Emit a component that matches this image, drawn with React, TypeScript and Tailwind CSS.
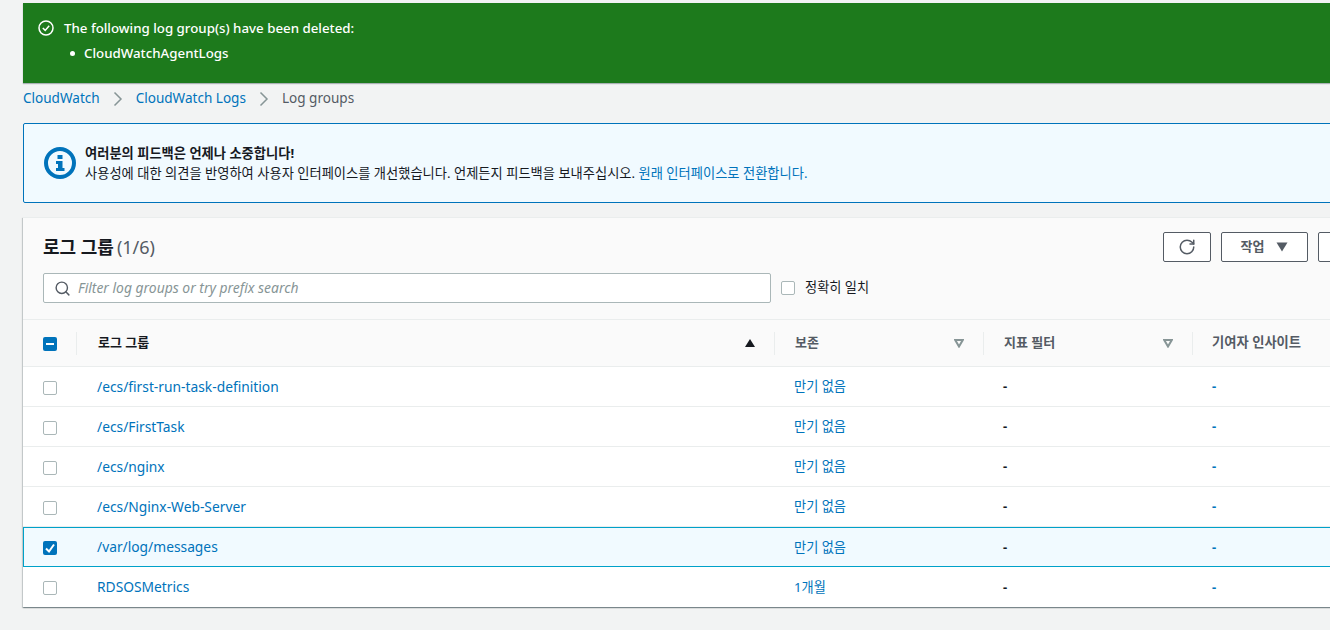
import { Search, RotateCw } from 'lucide-react'

const FONT = "font-['Noto_Sans','Noto_Sans_CJK_KR',sans-serif]"
const GRID = 'grid grid-cols-[54px_698px_209px_209px_209px]'

const rows = [
  { name: '/ecs/first-run-task-definition', retention: '만기 없음' },
  { name: '/ecs/FirstTask', retention: '만기 없음' },
  { name: '/ecs/nginx', retention: '만기 없음' },
  { name: '/ecs/Nginx-Web-Server', retention: '만기 없음' },
  { name: '/var/log/messages', retention: '만기 없음', selected: true },
  { name: 'RDSOSMetrics', retention: '1개월' },
]

function Checkbox({ state }: { state?: 'checked' | 'mixed' }) {
  if (state) {
    return (
      <span className="flex h-[14px] w-[14px] items-center justify-center rounded-[2px] bg-[#0073bb]">
        <svg viewBox="0 0 14 14" className="h-[14px] w-[14px]" fill="none" stroke="white" strokeWidth="2">
          {state === 'checked' ? <path d="M3 7.5 L6 10.5 L11 3.5" /> : <path d="M3 7 H11" />}
        </svg>
      </span>
    )
  }
  return <span className="block h-[14px] w-[14px] rounded-[2px] border border-[#aab7b8] bg-white" />
}

function Sep() {
  return <span className="h-[23px] w-px bg-[#eaeded]" />
}

function FilterCaret() {
  return (
    <svg viewBox="0 0 10 10" className="h-[10px] w-[10px]" fill="none" stroke="#879596" strokeWidth="2">
      <path d="M1.2 2 H8.8 L5 8.5 Z" />
    </svg>
  )
}

function Chevron() {
  return (
    <svg viewBox="0 0 10 16" className="mx-[13px] h-[16px] w-[10px]" fill="none" stroke="#879596" strokeWidth="1.5">
      <path d="M1.5 1.5 L8 8 L1.5 14.5" />
    </svg>
  )
}

export default function App() {
  return (
    <div className={`${FONT} h-[630px] w-[1330px] overflow-hidden bg-[#f2f3f3] pl-[23px] pt-[3px] text-[13px] text-[#16191f]`}>
      <div className="w-[1379px]">
        {/* Flash */}
        <div className="flex h-[80px] bg-[#1d7a1c] pl-[15px] pt-[15px] text-[13.3px] text-white shadow-[0_1px_1px_rgba(0,28,36,0.3)]">
          <svg viewBox="0 0 16 16" className="mt-[2px] h-[16px] w-[16px]" fill="none" stroke="white" strokeWidth="1.5">
            <circle cx="8" cy="8" r="7" />
            <path d="M4.8 8 L7.2 10.4 L11.2 5.8" />
          </svg>
          <div className="ml-[10px] leading-[20px]">
            <div className="font-medium">The following log group(s) have been deleted:</div>
            <ul className="mt-[5px] flex items-center pl-[6px]">
              <li className="mr-[9px] h-[5px] w-[5px] rounded-full bg-white" />
              <li className="font-medium">CloudWatchAgentLogs</li>
            </ul>
          </div>
        </div>

        {/* Breadcrumbs */}
        <div className="flex h-[30px] items-center pt-[1px] text-[13.55px] text-[#545b64]">
          <span className="text-[#0073bb]">CloudWatch</span>
          <Chevron />
          <span className="text-[#0073bb]">CloudWatch Logs</span>
          <Chevron />
          <span>Log groups</span>
        </div>

        {/* Info */}
        <div className="mt-[10px] flex h-[80px] items-center rounded-[2px] border border-[#0073bb] bg-[#f1faff] pl-[20px]">
          <svg viewBox="0 0 32 32" className="h-[32px] w-[32px]">
            <circle cx="16" cy="16" r="14" fill="none" stroke="#0073bb" strokeWidth="4" />
            <rect x="13.5" y="8" width="5" height="4" fill="#0073bb" />
            <path d="M12 14 H18.5 V21 H20.5 V24 H12 V21 H14 V17 H12 Z" fill="#0073bb" />
          </svg>
          <div className="ml-[9px] text-[13.25px] leading-[20px]">
            <div className="font-bold">여러분의 피드백은 언제나 소중합니다!</div>
            <div>
              사용성에 대한 의견을 반영하여 사용자 인터페이스를 개선했습니다. 언제든지 피드백을 보내주십시오.{' '}
              <span className="text-[#0073bb]">원래 인터페이스로 전환합니다.</span>
            </div>
          </div>
        </div>

        {/* Card */}
        <div className="mt-[14px] h-[390px] border-t border-[#eaeded] bg-white shadow-[0_1px_1px_0_rgba(0,28,36,0.3),1px_1px_1px_0_rgba(0,28,36,0.15),-1px_1px_1px_0_rgba(0,28,36,0.15)]">
          <div className="h-[102px] border-b border-[#eaeded] bg-[#fafafa] pl-[20px]">
            <div className="flex h-[55px] items-center justify-between pr-[43px]">
              <h1 className="pt-[4px] text-[18px] font-bold">
                로그 그룹<span className="ml-[3px] font-normal text-[#545b64]">(1/6)</span>
              </h1>
              <div className="flex items-center gap-[10px] pt-[2px]">
                <button className="flex h-[30px] w-[48px] items-center justify-center rounded-[2px] border border-[#545b64] bg-white text-[#545b64]">
                  <RotateCw size={18} strokeWidth={2} />
                </button>
                <button className="flex h-[30px] w-[87px] items-center justify-center gap-[12px] rounded-[2px] border border-[#545b64] bg-white text-[13px] font-bold text-[#545b64]">
                  작업
                  <svg viewBox="0 0 12 10" className="h-[10px] w-[12px]" fill="#545b64">
                    <path d="M0.5 0.5 H11.5 L6 9.5 Z" />
                  </svg>
                </button>
                <button className="h-[30px] w-[41px] rounded-[2px] border border-[#545b64] bg-white" />
              </div>
            </div>
            <div className="flex items-center">
              <div className="flex h-[30px] w-[728px] items-center rounded-[2px] border border-[#aab7b8] bg-white pl-[10px]">
                <Search size={17} strokeWidth={2} className="text-[#545b64]" />
                <span className="ml-[7px] pt-[1px] text-[13.9px] italic text-[#879596]">Filter log groups or try prefix search</span>
              </div>
              <span className="ml-[10px]"><Checkbox /></span>
              <span className="ml-[10px] text-[13.2px]">정확히 일치</span>
            </div>
          </div>

          {/* Table head */}
          <div className={`${GRID} h-[47px] items-center border-b border-[#eaeded] bg-[#fafafa] text-[13px] font-bold`}>
            <div className="flex items-center justify-between pl-[20px]">
              <span className="pt-[1px]"><Checkbox state="mixed" /></span>
              <Sep />
            </div>
            <div className="flex items-center justify-between pl-[21px]">
              <span>로그 그룹</span>
              <span className="flex items-center gap-[19px]">
                <svg viewBox="0 0 10 10" className="h-[10px] w-[10px]" fill="#16191f"><path d="M0 9 H10 L5 1 Z" /></svg>
                <Sep />
              </span>
            </div>
            {['보존', '지표 필터'].map((label) => (
              <div key={label} className="flex items-center justify-between pl-[20px] text-[#545b64]">
                <span>{label}</span>
                <span className="flex items-center gap-[19px]">
                  <FilterCaret />
                  <Sep />
                </span>
              </div>
            ))}
            <div className="pl-[19px] text-[13.3px] text-[#545b64]">기여자 인사이트</div>
          </div>

          {/* Rows */}
          {rows.map((row) => (
            <div
              key={row.name}
              className={`${GRID} h-[40px] items-center pt-[1px] ${
                row.selected ? 'bg-[#f1faff] shadow-[inset_0_0_0_1px_#00a1c9]' : 'border-b border-[#eaeded] last:border-b-0'
              }`}
            >
              <div className={row.selected ? 'pl-[20px]' : 'pl-[20px] pt-[1px]'}>
                <Checkbox state={row.selected ? 'checked' : undefined} />
              </div>
              <div className="pl-[20px] text-[13.8px] text-[#0073bb]">{row.name}</div>
              <div className="pl-[19px] text-[13.2px] text-[#0073bb]">{row.retention}</div>
              <div className="pl-[19px] font-bold">-</div>
              <div className="pl-[19px] font-bold text-[#0073bb]">-</div>
            </div>
          ))}
        </div>
      </div>
    </div>
  )
}
